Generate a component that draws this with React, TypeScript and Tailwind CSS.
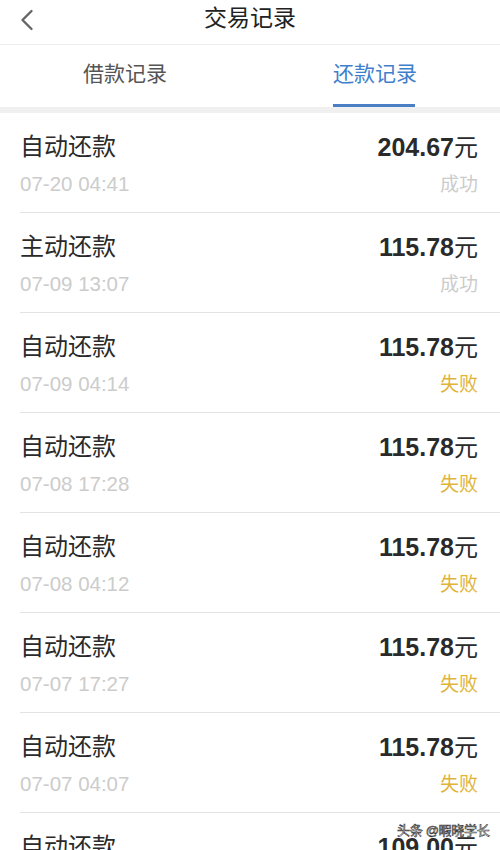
import { ChevronLeft } from "lucide-react";

const rows = [
  { title: "自动还款", time: "07-20 04:41", amount: "204.67", ok: true },
  { title: "主动还款", time: "07-09 13:07", amount: "115.78", ok: true },
  { title: "自动还款", time: "07-09 04:14", amount: "115.78", ok: false },
  { title: "自动还款", time: "07-08 17:28", amount: "115.78", ok: false },
  { title: "自动还款", time: "07-08 04:12", amount: "115.78", ok: false },
  { title: "自动还款", time: "07-07 17:27", amount: "115.78", ok: false },
  { title: "自动还款", time: "07-07 04:07", amount: "115.78", ok: false },
  { title: "自动还款", time: "07-06 17:30", amount: "109.00", ok: false },
];

export default function App() {
  return (
    <div className="relative h-[850px] w-[500px] overflow-hidden bg-white font-['Liberation_Sans','Noto_Sans_CJK_SC',sans-serif]">
      <header className="relative flex h-[45px] items-center justify-center border-b border-[#ededed] pb-[8px]">
        <ChevronLeft
          className="absolute left-[9px] top-[2px] h-[36px] w-[36px] text-[#666]"
          strokeWidth={1.6}
        />
        <h1 className="text-[23px] leading-none text-[#222]">交易记录</h1>
      </header>

      <nav className="flex h-[68px] border-b-[6px] border-[#f0f0f0]">
        <div className="flex flex-1 items-center justify-center pb-[5px]">
          <span className="text-[21px] text-[#555]">借款记录</span>
        </div>
        <div className="relative flex flex-1 items-center justify-center pb-[5px]">
          <span className="text-[21px] text-[#3f7fcb]">还款记录</span>
          <div className="absolute bottom-[0px] left-[83px] h-[3px] w-[82px] bg-[#4a7fc6]" />
        </div>
      </nav>

      <ul>
        {rows.map((r, i) => (
          <li
            key={i}
            className="ml-[20px] flex justify-between border-b border-[#e3e3e3] pr-[22px] pt-[19px] pb-[15px]"
          >
            <div className="flex flex-col">
              <span className="text-[24px] leading-[30px] text-[#2a2a2a]">{r.title}</span>
              <span className="mt-[9px] text-[20.5px] leading-[25px] text-[#cccccc]">{r.time}</span>
            </div>
            <div className="flex flex-col items-end">
              <span className="text-[25px] font-bold leading-[30px] text-[#2a2a2a]">
                {r.amount}
                <span className="text-[24px] font-normal">元</span>
              </span>
              <span
                className={
                  r.ok
                    ? "mt-[9px] text-[19px] leading-[25px] text-[#cccccc]"
                    : "mt-[9px] text-[19px] leading-[25px] text-[#e0b43a]"
                }
              >
                {r.ok ? "成功" : "失败"}
              </span>
            </div>
          </li>
        ))}
      </ul>

      <div className="absolute left-[397px] top-[824px] whitespace-nowrap text-[13px] leading-none tracking-[-0.3px] text-white [-webkit-text-stroke:0.6px_#333]">
        头条 @暇晓学长
      </div>
    </div>
  );
}
